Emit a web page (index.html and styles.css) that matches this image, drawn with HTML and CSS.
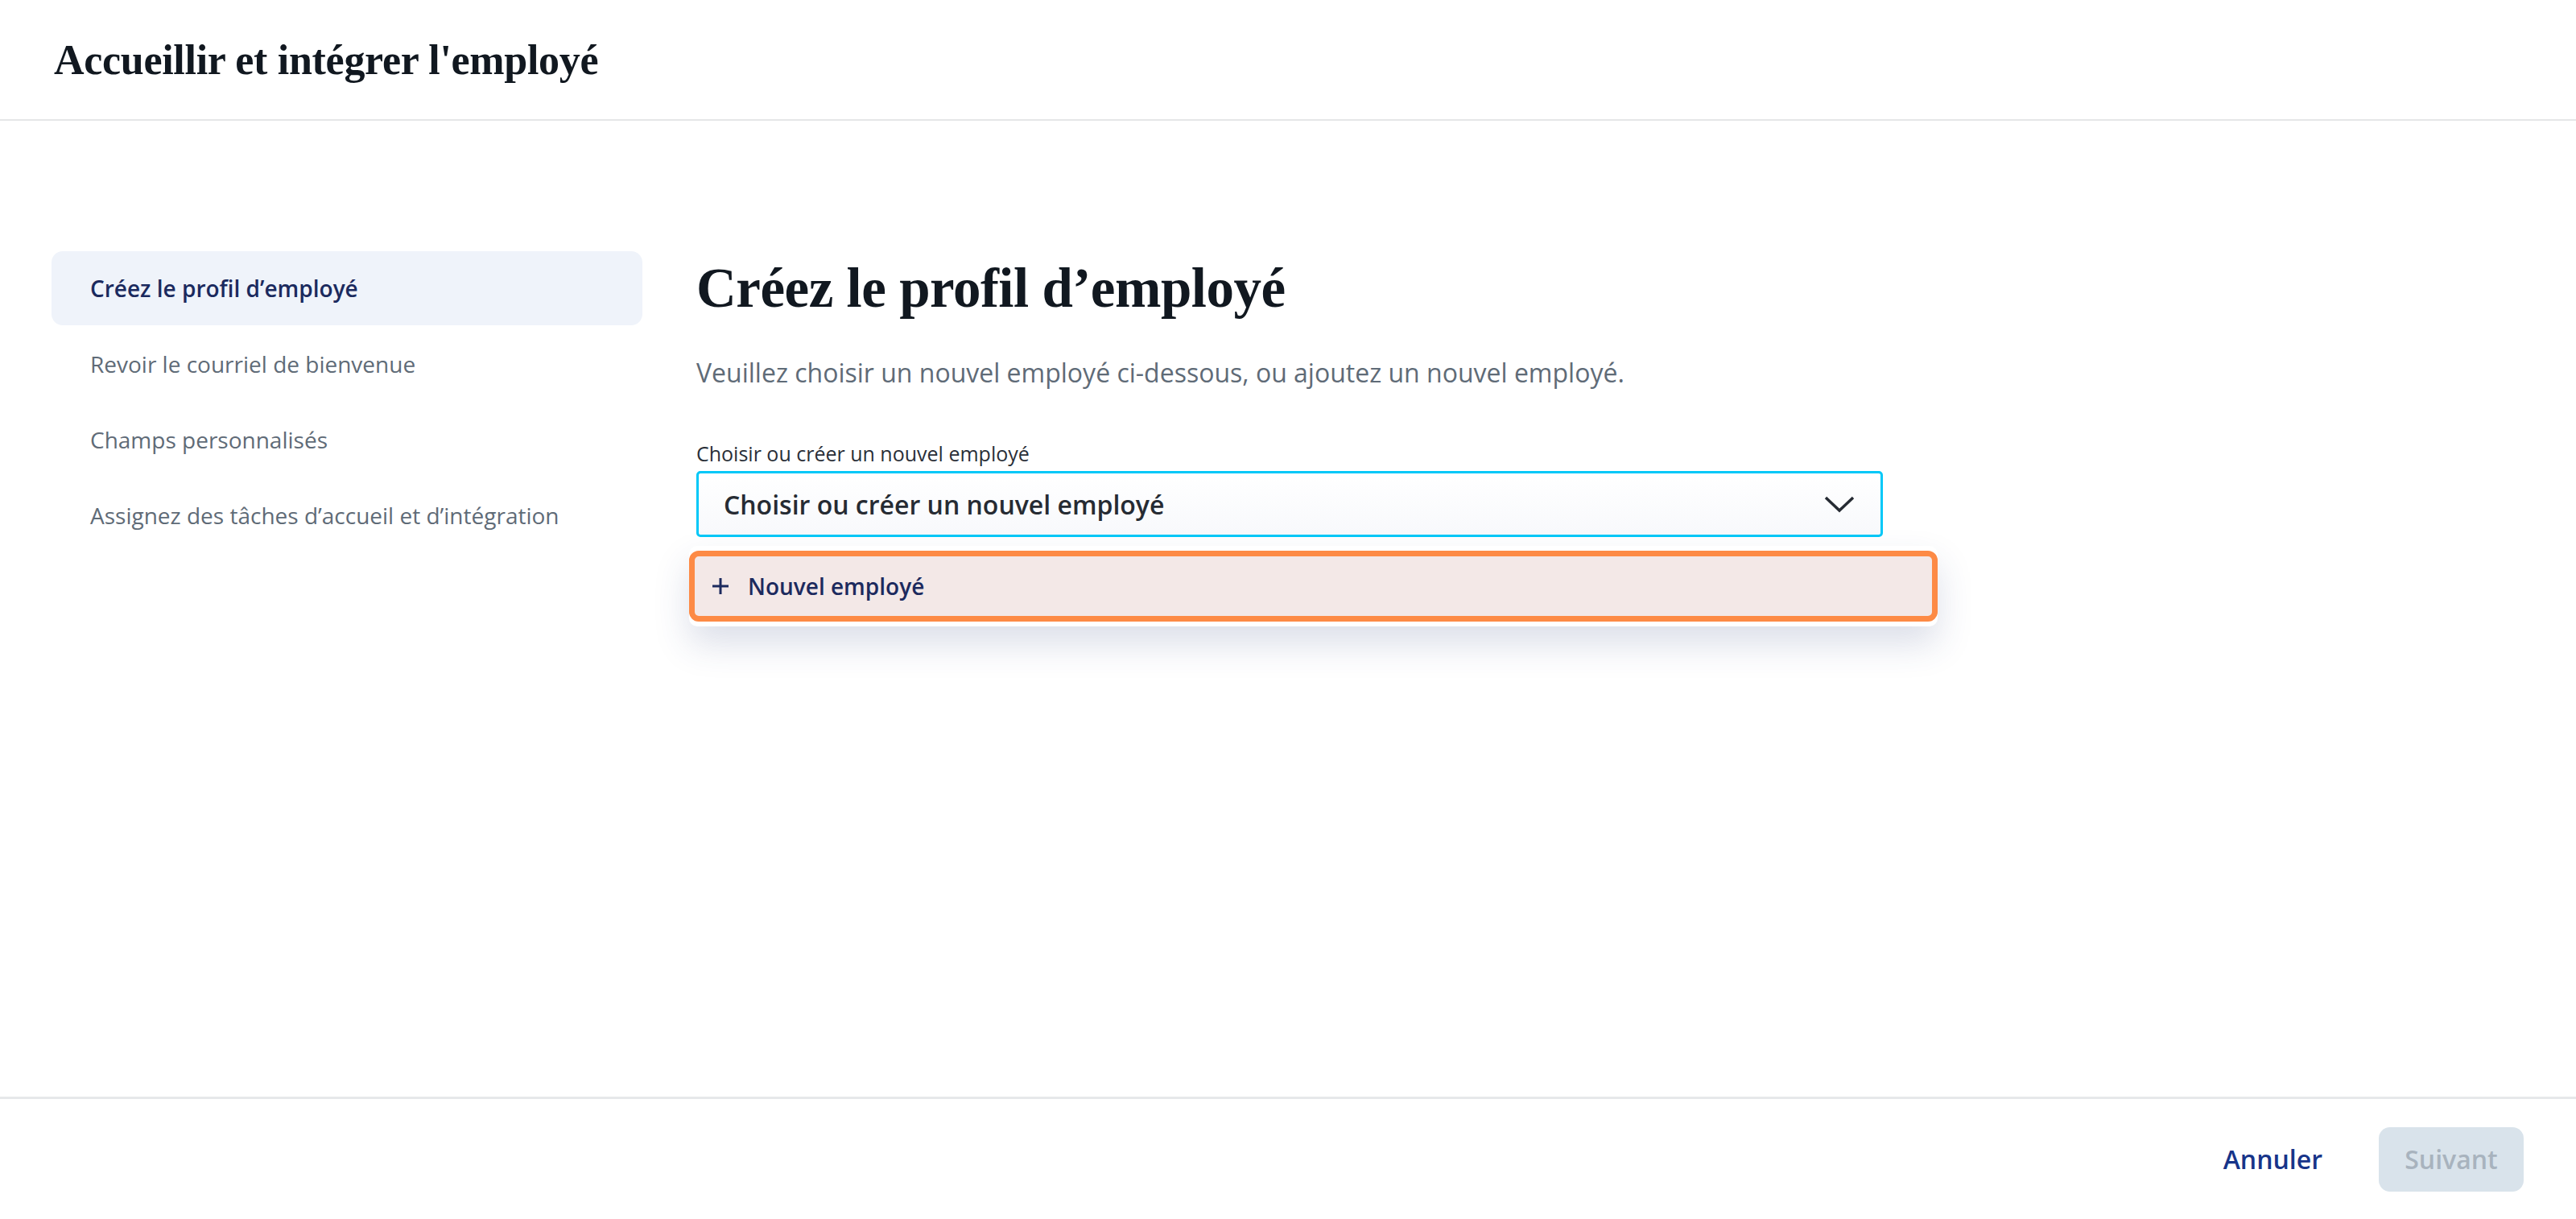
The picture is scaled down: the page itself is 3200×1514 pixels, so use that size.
FILE: index.html
```html
<!DOCTYPE html>
<html>
<head>
  <title>Accueillir et intégrer l'employé</title>
  <link rel="stylesheet" href="styles.css">
</head>
<body>
  <header class="topbar">
    <h1 class="topbar-title">Accueillir et intégrer l'employé</h1>
  </header>

  <div class="content">
    <nav class="steps">
      <a class="step active">Créez le profil d’employé</a>
      <a class="step">Revoir le courriel de bienvenue</a>
      <a class="step">Champs personnalisés</a>
      <a class="step">Assignez des tâches d’accueil et d’intégration</a>
    </nav>

    <main class="panel">
      <h2 class="panel-title">Créez le profil d’employé</h2>
      <p class="panel-intro">Veuillez choisir un nouvel employé ci-dessous, ou ajoutez un nouvel employé.</p>

      <label class="field-label">Choisir ou créer un nouvel employé</label>
      <div class="select-wrap">
        <div class="select">
          <span>Choisir ou créer un nouvel employé</span>
          <svg class="chevron" width="38" height="22" viewBox="0 0 38 22">
            <path d="M2 3 L19 19 L36 3" fill="none" stroke="#262b33" stroke-width="3.5"/>
          </svg>
        </div>
        <div class="dropdown">
          <div class="option">
            <svg class="plus" width="24" height="24" viewBox="0 0 24 24">
              <path d="M12 2 V22 M2 12 H22" stroke="#1c2a5e" stroke-width="3"/>
            </svg>
            <span>Nouvel employé</span>
          </div>
        </div>
      </div>
    </main>
  </div>

  <footer class="footer">
    <button class="btn-link">Annuler</button>
    <button class="btn-next" disabled>Suivant</button>
  </footer>
</body>
</html>
```

FILE: styles.css
```css
body {
  margin: 0;
  height: 100vh;
  display: flex;
  flex-direction: column;
  font-family: "Open Sans", "Noto Sans", sans-serif;
  color: #1d2330;
  background-color: #ffffff;
}

.topbar {
  height: 148px;
  border-bottom: 2px solid #e5e6e7;
  display: flex;
  align-items: center;
  padding: 0 67px;
  flex-shrink: 0;
}

.topbar-title {
  margin: 0;
  font-family: "Liberation Serif", serif;
  font-weight: bold;
  font-size: 52px;
  letter-spacing: -0.3px;
  color: #111820;
}

.content {
  flex: 1;
  display: flex;
  gap: 67px;
  padding: 162px 64px 0;
}

.steps {
  width: 734px;
  display: flex;
  flex-direction: column;
  gap: 2px;
}

.step {
  height: 92px;
  display: flex;
  align-items: center;
  padding: 0 48px;
  border-radius: 14px;
  font-size: 28px;
  color: #5f6b77;
}

.step.active {
  background-color: #eff3fa;
  color: #1b2a5e;
  font-weight: 600;
}

.panel {
  width: 1474px;
}

.panel-title {
  margin: 0;
  line-height: 92px;
  font-family: "Liberation Serif", serif;
  font-weight: bold;
  font-size: 69px;
  letter-spacing: -0.5px;
  color: #111820;
}

.panel-intro {
  margin: 37px 0 0;
  line-height: 44px;
  font-size: 32px;
  color: #5f6b77;
}

.field-label {
  display: block;
  margin-top: 63px;
  line-height: 30px;
  font-size: 25px;
  font-weight: 500;
  color: #2a2f38;
}

.select-wrap {
  position: relative;
  margin-top: 7px;
}

.select {
  height: 82px;
  box-sizing: border-box;
  border: 3.5px solid #00c8f8;
  border-radius: 5px;
  display: flex;
  align-items: center;
  justify-content: space-between;
  padding: 0 32px 0 31px;
  font-size: 32px;
  font-weight: 600;
  color: #262b33;
  background: linear-gradient(#ffffff, #f8f9fc);
}

.dropdown {
  position: absolute;
  top: 93px;
  left: -9px;
  width: 1551px;
  padding: 6px 0;
  background-color: #ffffff;
  border-radius: 10px;
  box-shadow: 0 22px 44px rgba(45, 65, 125, 0.17);
}

.option {
  height: 88px;
  box-sizing: border-box;
  border: 7px solid #fd8a45;
  border-radius: 12px;
  background-color: #f3e8e7;
  display: flex;
  align-items: center;
  gap: 22px;
  padding-left: 20px;
  font-size: 28px;
  font-weight: 600;
  color: #1c2a5e;
}

.footer {
  height: 149px;
  border-top: 3px solid #e6e8ea;
  display: flex;
  align-items: center;
  justify-content: flex-end;
  gap: 70px;
  padding: 0 65px;
  flex-shrink: 0;
}

.btn-link {
  border: none;
  background: none;
  font-family: inherit;
  font-size: 32px;
  font-weight: 600;
  color: #173489;
  padding: 0;
}

.btn-next {
  width: 180px;
  height: 80px;
  border: none;
  border-radius: 14px;
  background-color: #d9e3eb;
  font-family: inherit;
  font-size: 32px;
  font-weight: 600;
  color: #a8b3be;
}
```
